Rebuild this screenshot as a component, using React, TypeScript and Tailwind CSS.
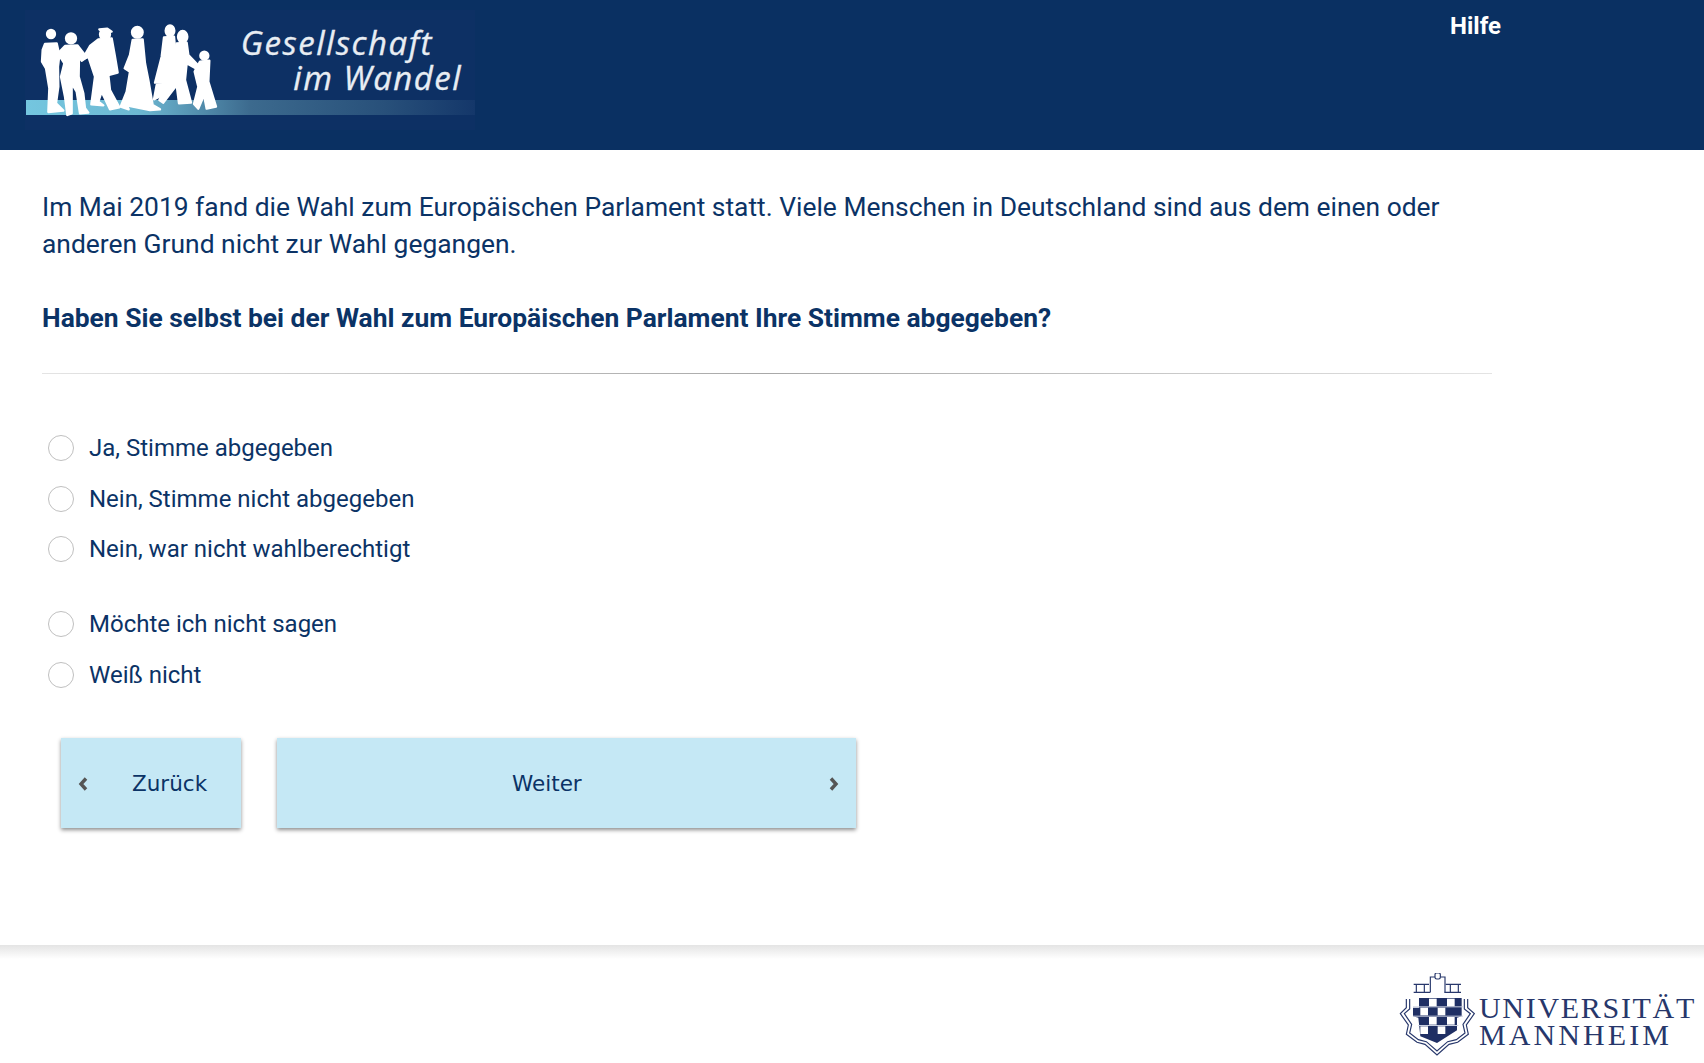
const options = [
  { label: "Ja, Stimme abgegeben", className: "mt-[61px]" },
  { label: "Nein, Stimme nicht abgegeben", className: "mt-[25px]" },
  { label: "Nein, war nicht wahlberechtigt", className: "mt-[24px]" },
  { label: "Möchte ich nicht sagen", className: "mt-[49px]" },
  { label: "Weiß nicht", className: "mt-[25px]" },
]

const whiteSquares = [
  [148, 205], [202, 205],
  [122, 232], [174, 232],
  [148, 260], [202, 260],
  [122, 288], [174, 288],
]

const StudyLogo = () => (
  <svg width="450" height="120" viewBox="75 30 1350 360" className="block">
    <defs>
      <linearGradient id="bar" x1="0" x2="1" y1="0" y2="0">
        <stop offset="0" stopColor="#74c6df" />
        <stop offset="0.25" stopColor="#6db8d2" />
        <stop offset="0.5" stopColor="#3c6a8e" />
        <stop offset="0.8" stopColor="#28507a" />
        <stop offset="1" stopColor="#14376a" />
      </linearGradient>
    </defs>
    <rect x="75" y="30" width="1350" height="360" fill="#0d3064" />
    <rect x="78" y="300" width="1347" height="45" fill="url(#bar)" />
    <g fill="#ffffff" stroke="#ffffff" strokeWidth="7" strokeLinejoin="round" transform="translate(90 60)">
      <circle cx="63" cy="42" r="12" />
      <path d="M45 72 L80 70 L88 105 L84 140 L85 200 L78 250 L100 272 L55 276 L58 205 L48 145 L36 125 L38 90 Z" />
      <circle cx="123" cy="55" r="15" />
      <path d="M105 78 L142 76 L170 112 L155 122 L147 110 L146 170 L160 220 L165 265 L175 278 L150 280 L140 215 L125 190 L125 280 L112 285 L105 230 L93 170 L103 130 L84 100 Z" />
      <circle cx="225" cy="43" r="15" />
      <path d="M208 28 L232 26 L245 35 L220 38 Z" />
      <path d="M205 58 L245 55 L255 110 L263 158 L235 165 L240 210 L268 262 L240 268 L215 215 L205 245 L220 256 L184 253 L195 170 L175 110 L157 118 L180 78 Z" />
      <circle cx="322" cy="37" r="16" />
      <path d="M308 60 L338 58 L345 130 L355 180 L368 255 L390 268 L360 270 L290 256 L296 268 L272 260 L290 215 L300 155 L284 145 L300 105 Z" />
      <ellipse cx="420" cy="32" rx="13" ry="16" />
      <path d="M402 52 L432 50 L445 190 L375 188 L395 110 Z" />
      <path d="M380 195 L415 195 L392 228 L372 238 Z" />
      <ellipse cx="458" cy="50" rx="14" ry="17" />
      <path d="M440 70 L470 68 L475 105 L508 140 L502 148 L470 130 L465 180 L483 248 L447 250 L440 195 L400 248 L388 240 L420 180 L430 120 Z" />
      <circle cx="523" cy="107" r="12" />
      <path d="M510 125 L538 122 L535 185 L558 260 L530 266 L522 225 L505 266 L492 252 L505 200 L494 155 Z" />
    </g>
    <text x="722" y="165" fill="#e8edf3" stroke="#e8edf3" strokeWidth="1" fontFamily="'Open Sans', sans-serif" fontStyle="italic" fontSize="99" letterSpacing="4.5">Gesellschaft</text>
    <text x="880" y="269" fill="#e8edf3" stroke="#e8edf3" strokeWidth="1" fontFamily="'Open Sans', sans-serif" fontStyle="italic" fontSize="99" letterSpacing="4.5">im Wandel</text>
  </svg>
)

const Crest = () => (
  <svg width="78" height="84" viewBox="55 128 234 252" className="block" fill="none" stroke="#27376b">
    <g strokeWidth="3.5">
      <path d="M152 186 V140 H166 M182 140 H196 V186" />
      <rect x="166" y="128" width="16" height="18" rx="5" />
      <path d="M102 162 H148 M102 186 H152 M110 162 V186 M134 162 V186 M198 162 H244 M194 186 H244 M212 162 V186 M236 162 V186" />
      <path d="M80 206 V232 L62 250 L86 284 L80 312 L112 336 L136 342 L172 374 L208 342 L234 336 L266 312 L260 284 L284 250 L264 232 V206" />
      <path d="M90 206 V236 L74 250 L96 282 L90 308 L116 328 L140 334 L172 362 L204 334 L230 328 L256 308 L250 282 L272 250 L254 236 V206" />
    </g>
    <path d="M118 203 H246 V258 L232 262 V300 L172 338 L122 318 L116 262 L100 258 V232 H118 Z" fill="#1f2f64" stroke="none" />
    <g stroke="none">
      <rect x="100" y="228" width="150" height="3" fill="#c9cfe0" />
      <rect x="100" y="256" width="150" height="3" fill="#c9cfe0" />
      <rect x="116" y="284" width="120" height="3" fill="#c9cfe0" />
      {whiteSquares.map(([x, y]) => (
        <rect key={`${x}-${y}`} x={x} y={y} width="23" height="23" fill="#ffffff" />
      ))}
    </g>
  </svg>
)

const App = () => {
  return (
    <div className="flex h-[1063px] flex-col overflow-hidden bg-white font-['Roboto',sans-serif] text-[#0b3366]">
      <header className="flex h-[150px] shrink-0 items-start bg-[#0a3062] pl-[25px] pt-[10px]">
        <StudyLogo />
        <div className="ml-[975px] mt-[1px] text-[24px] font-bold leading-[30px] text-white">Hilfe</div>
      </header>

      <main className="flex-1 pl-[42px]">
        <p className="mt-[39px] w-[1440px] text-[26.4px] leading-[37px]">
          Im Mai 2019 fand die Wahl zum Europäischen Parlament statt. Viele Menschen in Deutschland sind aus dem einen oder anderen Grund nicht zur Wahl gegangen.
        </p>
        <p className="mt-[37px] text-[26.4px] font-bold leading-[37px]">
          Haben Sie selbst bei der Wahl zum Europäischen Parlament Ihre Stimme abgegeben?
        </p>
        <div className="mt-[36px] h-px w-[1450px] bg-gradient-to-r from-[#e4e4e4] via-[#a8a8a8] to-[#e4e4e4]" />

        <div className="flex flex-col">
          {options.map(option => (
            <label key={option.label} className={`flex h-[26px] items-center ${option.className}`}>
              <span className="ml-[6px] h-[26px] w-[26px] shrink-0 rounded-full border border-[#c0c0c0] bg-white" />
              <span className="ml-[15px] text-[24px] leading-[26px]">{option.label}</span>
            </label>
          ))}
        </div>

        <div className="ml-[19px] mt-[50px] flex gap-[36px] font-['DejaVu_Sans',sans-serif] text-[21.5px]">
          <button className="relative h-[90px] w-[180px] bg-[#c5e8f5] pl-[71px] pt-[2px] text-left shadow-[0_2px_4px_rgba(0,0,0,0.45)]">
            <svg className="absolute left-[16px] top-[38px]" width="12" height="16" viewBox="0 0 12 16" fill="none" stroke="#555555" strokeWidth="3.4">
              <path d="M9 2.5 L4 8 L9 13.5" />
            </svg>
            Zurück
          </button>
          <button className="relative h-[90px] w-[579px] bg-[#c5e8f5] pl-[235px] pt-[2px] text-left shadow-[0_2px_4px_rgba(0,0,0,0.45)]">
            Weiter
            <svg className="absolute right-[16px] top-[38px]" width="12" height="16" viewBox="0 0 12 16" fill="none" stroke="#555555" strokeWidth="3.4">
              <path d="M3 2.5 L8 8 L3 13.5" />
            </svg>
          </button>
        </div>
      </main>

      <footer className="h-[118px] shrink-0 bg-gradient-to-b from-[#e4e4e4] from-0% to-white to-[14px] pr-[6px] pt-[28px]">
        <div className="flex items-start justify-end">
          <Crest />
          <div className="ml-[3px] w-[219px] font-['Liberation_Serif',serif] text-[#27376b]">
            <div className="mt-[21px] text-[30px] leading-[27px] tracking-[1.7px]">UNIVERSITÄT</div>
            <div className="text-[30px] leading-[27px] tracking-[3.1px]">MANNHEIM</div>
          </div>
        </div>
      </footer>
    </div>
  )
}

export default App
